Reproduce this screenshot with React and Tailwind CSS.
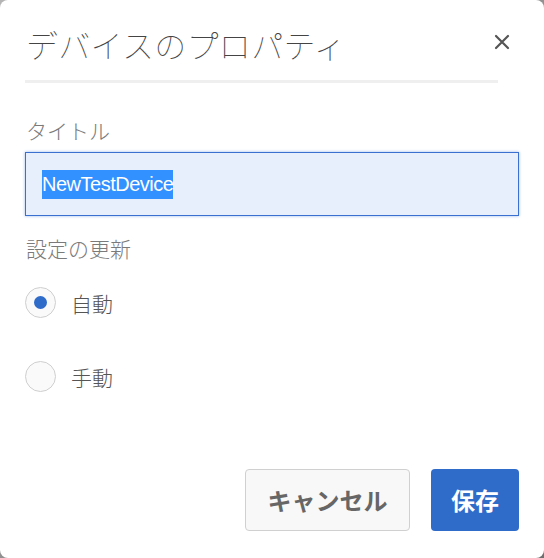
import React, { useState } from "react";

const jp = { fontFamily: '"Noto Sans CJK JP", "Noto Sans", sans-serif' };

function Radio({ checked, label, onClick, className }) {
  return (
    <div className={"flex items-center cursor-pointer " + className} onClick={onClick}>
      <div className="w-[31px] h-[31px] rounded-full border border-[#cfcfcf] bg-[#fafafa] flex items-center justify-center">
        {checked && <div className="w-[13px] h-[13px] rounded-full bg-[#2f6bc9]" />}
      </div>
      <div className="ml-[15px] text-[21px] leading-[30px] font-light text-[#555]">{label}</div>
    </div>
  );
}

export default function App() {
  const [mode, setmode] = useState("auto");

  return (
    <div className="w-[544px] h-[558px] bg-gradient-to-br from-[#b5b5b5] to-[#6f6f6f]" style={jp}>
      <div className="relative w-full h-full bg-white rounded-[8px]">
        <div className="flex items-center justify-between pl-[26px] pr-[34px] pt-[14px] h-[80px]">
          <div className="text-[32px] leading-[44px] font-thin text-[#444] -mt-[6px] tracking-[0.3px]">
            デバイスのプロパティ
          </div>
          <button className="-mt-[10px]">
            <svg width="16" height="16" viewBox="0 0 16 16">
              <path d="M2 2 L14 14 M14 2 L2 14" stroke="#555" strokeWidth="2.2" strokeLinecap="round" />
            </svg>
          </button>
        </div>
        <div className="mx-[25px] w-[473px] h-[3px] bg-[#efefef]" />

        <div className="px-[25px]">
          <div className="mt-[32px] text-[21px] leading-[30px] font-light text-[#7a7a7a] pl-[1px]">タイトル</div>
          <div className="mt-[7px] h-[64px] border border-[#3a70d0] bg-[#e8effc] shadow-[0_0_3px_#9ab8ec] flex items-center pl-[16px]">
            <span
              className="bg-[#3390ff] text-white text-[20px] leading-[29px] tracking-[-0.5px]"
              style={{ fontFamily: '"Liberation Sans", "Noto Sans", sans-serif' }}
            >
              NewTestDevice
            </span>
          </div>

          <div className="mt-[17px] text-[21px] leading-[30px] font-light text-[#7a7a7a] pl-[1px]">設定の更新</div>
          <Radio
            className="mt-[24px]"
            checked={mode === "auto"}
            label="自動"
            onClick={() => setmode("auto")}
          />
          <Radio
            className="mt-[43px]"
            checked={mode === "manual"}
            label="手動"
            onClick={() => setmode("manual")}
          />
        </div>

        <div className="absolute right-[25px] top-[469px] flex gap-[21px]">
          <button className="w-[165px] h-[62px] rounded-[4px] border border-[#d0d0d0] bg-[#f8f8f8] text-[24px] font-bold text-[#666]">
            キャンセル
          </button>
          <button className="w-[88px] h-[62px] rounded-[4px] bg-[#2f6bc8] text-[24px] font-bold text-white">
            保存
          </button>
        </div>
      </div>
    </div>
  );
}
